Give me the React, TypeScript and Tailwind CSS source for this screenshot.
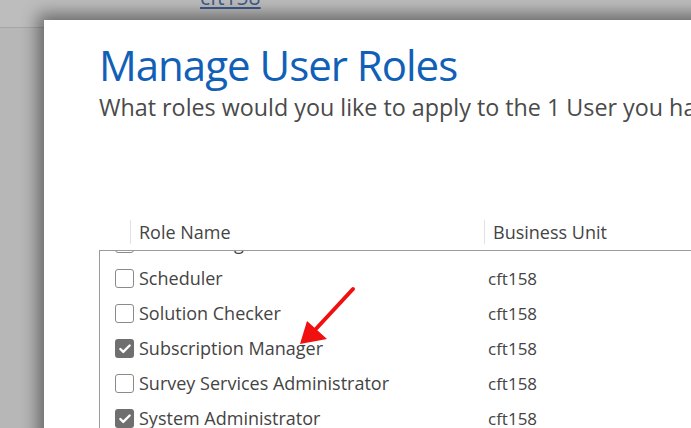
import { Check } from 'lucide-react'

interface Role {
  name: string
  unit: string
  checked: boolean
}

const ROLES: Role[] = [
  { name: 'Sales Manager', unit: 'cft158', checked: false },
  { name: 'Scheduler', unit: 'cft158', checked: false },
  { name: 'Solution Checker', unit: 'cft158', checked: false },
  { name: 'Subscription Manager', unit: 'cft158', checked: true },
  { name: 'Survey Services Administrator', unit: 'cft158', checked: false },
  { name: 'System Administrator', unit: 'cft158', checked: true },
  { name: 'System Customizer', unit: 'cft158', checked: false },
]

function RoleCheckbox({ checked }: { checked: boolean }) {
  if (checked) {
    return (
      <span className="flex h-[19px] w-[19px] shrink-0 items-center justify-center rounded-[3px] bg-[#6f6f6f]">
        <Check className="h-[14px] w-[14px] text-white" strokeWidth={4} />
      </span>
    )
  }
  return <span className="h-[19px] w-[19px] shrink-0 rounded-[3px] border border-[#8a8a8a] bg-white" />
}

function RoleRow({ role }: { role: Role }) {
  return (
    <div className="flex h-[35px] items-center">
      <div className="flex w-[372px] items-center gap-[5px] pl-[15px]">
        <RoleCheckbox checked={role.checked} />
        <span className="whitespace-nowrap">{role.name}</span>
      </div>
      <span className="pl-[16px] text-[17px]">{role.unit}</span>
    </div>
  )
}

export default function App() {
  return (
    <div
      className="relative h-[428px] w-[691px] overflow-hidden bg-[#b7b7b7]"
      style={{ fontFamily: '"Open Sans", "Noto Sans", sans-serif' }}
    >
      <div className="relative h-[28px] border-b border-[#a6a6a6] bg-[#bdbdbd]">
        <span className="absolute left-[200px] top-[-18px] text-[21px] text-[#3e5b8c] underline">cft158</span>
      </div>

      <div className="absolute left-[44px] top-[20px] h-[440px] w-[680px] bg-white shadow-[0_0_16px_6px_rgba(0,0,0,0.45)]">
        <div className="pl-[55px] pt-[17px]">
          <h1 className="whitespace-nowrap text-[42px] leading-[56px] tracking-[-1px] text-[#1160b7]">
            Manage User Roles
          </h1>
          <p className="whitespace-nowrap text-[23.3px] leading-[28px] text-[#4a4a4a]">
            What roles would you like to apply to the 1 User you have selected?
          </p>

          <div className="mt-[93px] text-[18px] text-[#444]">
            <div className="flex h-[36px] items-center">
              <div className="ml-[31px] flex h-[24px] w-[354px] items-center border-l border-[#e1e1e1] pl-[8px]">
                Role Name
              </div>
              <div className="flex h-[24px] items-center border-l border-[#e1e1e1] pl-[8px]">Business Unit</div>
            </div>
            <div className="h-[200px] overflow-hidden border-l border-t border-[#9a9a9a]">
              <div className="mt-[-25px]">
                {ROLES.map((role) => (
                  <RoleRow key={role.name} role={role} />
                ))}
              </div>
            </div>
          </div>
        </div>
      </div>

      <svg className="absolute left-0 top-0" width="691" height="428" viewBox="0 0 691 428">
        <line x1="353" y1="289" x2="314" y2="331" stroke="#f01010" strokeWidth="4" strokeLinecap="round" />
        <polygon points="300,344 307,321 327,339" fill="#f01010" />
      </svg>
    </div>
  )
}
